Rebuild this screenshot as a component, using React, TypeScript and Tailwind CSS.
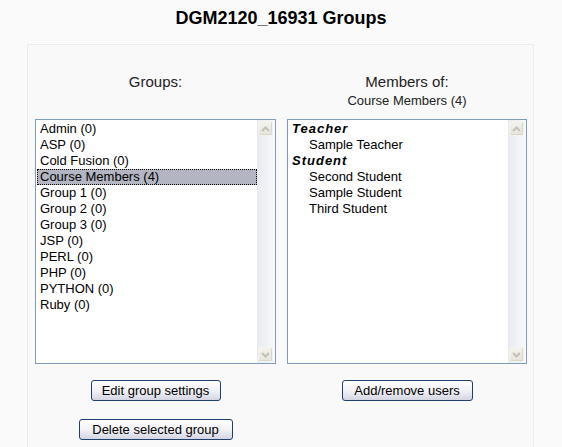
import React from "react";

function ScrollBtn({ dir }: { dir: "up" | "down" }) {
  return (
    <div className="w-[15px] h-[15px] ml-[1px] rounded-[2px] border border-[#f4f4ee] bg-gradient-to-b from-[#f3f3ec] to-[#e6e5dc] shadow-[inset_-1px_-1px_0_#d8d7cc] flex items-center justify-center">
      <svg width="9" height="6" viewBox="0 0 9 6">
        {dir === "up" ? (
          <path d="M1 5 L4.5 1.5 L8 5" fill="none" stroke="#c3c2b8" strokeWidth="2" />
        ) : (
          <path d="M1 1 L4.5 4.5 L8 1" fill="none" stroke="#c3c2b8" strokeWidth="2" />
        )}
      </svg>
    </div>
  );
}

function ScrollBar() {
  return (
    <div className="w-[18px] py-[1px] flex flex-col justify-between bg-gradient-to-r from-[#e8eaf1] to-[#f8f9fc]">
      <ScrollBtn dir="up" />
      <ScrollBtn dir="down" />
    </div>
  );
}

const groups = [
  "Admin (0)",
  "ASP (0)",
  "Cold Fusion (0)",
  "Course Members (4)",
  "Group 1 (0)",
  "Group 2 (0)",
  "Group 3 (0)",
  "JSP (0)",
  "PERL (0)",
  "PHP (0)",
  "PYTHON (0)",
  "Ruby (0)",
];

const members: { label: string; items: string[] }[] = [
  { label: "Teacher", items: ["Sample Teacher"] },
  { label: "Student", items: ["Second Student", "Sample Student", "Third Student"] },
];

function Btn({ children, w }: { children: React.ReactNode; w: string }) {
  return (
    <button
      className={`${w} h-[21px] rounded-[3px] border border-[#1f3f6d] bg-gradient-to-b from-white via-[#f2f2f6] to-[#d3d5e2] text-[13px] leading-[19px] text-black text-center`}
    >
      {children}
    </button>
  );
}

export default function App() {
  return (
    <div className="w-[562px] h-[447px] overflow-hidden bg-[#fafafa] font-['Liberation_Sans',Arial,sans-serif] text-black">
      <h2 className="pt-[8px] text-center text-[18px] leading-[21px] font-bold">DGM2120_16931 Groups</h2>
      <div className="mt-[15px] ml-[27px] w-[507px] border border-[#ececec] bg-[#f9f9f9] pt-[27px] pl-[7px] pb-[30px]">
        <div className="grid grid-cols-[241px_240px] gap-x-[11px]">
          <div className="text-center text-[15px] leading-[20px] text-[#222]">Groups:</div>
          <div className="text-center text-[#222]">
            <div className="text-[15px] leading-[20px]">Members of:</div>
            <div className="text-[13px] leading-[18px]">Course Members (4)</div>
          </div>

          <div className="mt-[9px] h-[245px] border border-[#7f9db9] bg-white flex">
            <div className="flex-1 pt-[1px] pl-[1px] text-[13px]">
              {groups.map((g) =>
                g === "Course Members (4)" ? (
                  <div
                    key={g}
                    className="h-[16px] leading-[14px] px-[2px] bg-[#b3b5c2] border border-dotted border-black"
                  >
                    {g}
                  </div>
                ) : (
                  <div key={g} className="h-[16px] leading-[16px] px-[3px]">
                    {g}
                  </div>
                )
              )}
            </div>
            <ScrollBar />
          </div>

          <div className="mt-[9px] h-[245px] border border-[#7f9db9] bg-white flex">
            <div className="flex-1 pt-[1px] pl-[1px] text-[13px]">
              {members.map((grp) => (
                <div key={grp.label}>
                  <div className="h-[16px] leading-[16px] px-[3px] font-bold italic tracking-[1px]">
                    {grp.label}
                  </div>
                  {grp.items.map((it) => (
                    <div key={it} className="h-[16px] leading-[16px] pl-[20px]">
                      {it}
                    </div>
                  ))}
                </div>
              ))}
            </div>
            <ScrollBar />
          </div>

          <div className="mt-[16px] flex flex-col items-center gap-[18px]">
            <Btn w="w-[130px]">Edit group settings</Btn>
            <Btn w="w-[154px]">Delete selected group</Btn>
          </div>
          <div className="mt-[16px] flex flex-col items-center">
            <Btn w="w-[131px]">Add/remove users</Btn>
          </div>
        </div>
      </div>
    </div>
  );
}
